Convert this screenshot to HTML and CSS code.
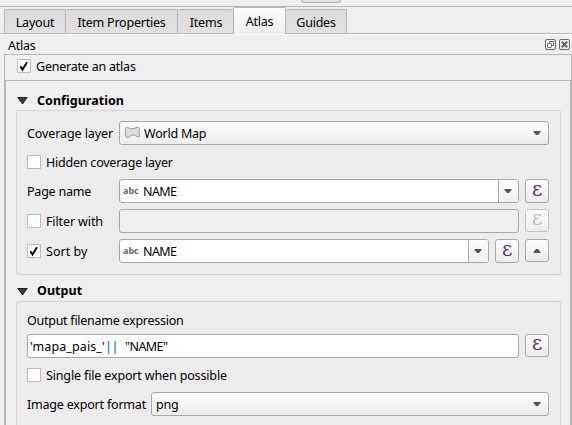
FILE: index.html
```
<!DOCTYPE html>
<html lang="en">
<head>
<meta charset="utf-8">
<title>Atlas</title>
<link rel="stylesheet" href="styles.css">
</head>
<body>
<svg class="defs" width="0" height="0" aria-hidden="true">
  <symbol id="down" viewBox="0 0 8 5"><path d="M.5 0h7v1L5 4H3L.5 1z"/></symbol>
  <symbol id="tri" viewBox="0 0 11 8"><path d="M.8.500h9.400L5.500 7z" fill="#3c3c3c" stroke="#222" stroke-linejoin="round"/></symbol>
  <symbol id="tick" viewBox="0 0 14 14"><path d="M3.300 7.200 5.500 10.600 10 3.200" fill="none" stroke="#000" stroke-width="1.900"/></symbol>
</svg>
<div class="toolbar"><div class="stub"></div></div>
<nav class="tabs">
  <div class="tab t1"><span>Layout</span></div>
  <div class="tab t2"><span>Item Properties</span></div>
  <div class="tab t3"><span>Items</span></div>
  <div class="tab t4 active"><span>Atlas</span></div>
  <div class="tab t5"><span>Guides</span></div>
</nav>
<header class="dock">
  <span class="dock-title">Atlas</span>
  <svg class="dock-btn" viewBox="0 0 11 11"><rect x=".5" y=".5" width="10" height="10" rx="1.500"/><path d="M4.500 4V2.500h4v4H7"/><rect x="2.500" y="4.500" width="4" height="4" rx=".7"/></svg>
  <svg class="dock-btn" viewBox="0 0 11 11"><rect x=".5" y=".5" width="10" height="10" rx="1.500"/><path class="cross" d="M2.800 2.800l5.400 5.400M8.200 2.800L2.800 8.200"/></svg>
</header>
<main class="panel">
  <div class="generate"><span class="check"><svg><use href="#tick"/></svg></span><span class="text">Generate an atlas</span></div>
  <div class="scroll">
    <h2><svg class="tri"><use href="#tri"/></svg><span>Configuration</span></h2>
    <section class="group config">
      <div class="row"><label class="coverage">Coverage layer</label>
        <div class="combo"><svg class="poly" viewBox="0 0 17 13"><path d="M2.500 1.200C4 .7 5 2.900 8 2.900S12.500.700 14.700 1.500c1.700.8.600 3 .2 4.500-.2 1.500 1.400 3.500.2 4.700-1.700 1.200-3.600-1.900-6.200-1.900C6.500 8.800 5 12 2.800 11.400.6 10.700 1.500 8 1.700 6.500 1.900 5 .3 2 2.500 1.200z"/></svg><span class="value">World Map</span><svg class="arrow"><use href="#down"/></svg></div></div>
      <div class="row"><span class="check"></span><span class="text">Hidden coverage layer</span></div>
      <div class="row"><label>Page name</label>
        <div class="field"><span class="abc">abc</span><span class="value name">NAME</span><div class="drop"><svg class="arrow"><use href="#down"/></svg></div></div><div class="btn"><span>ε</span></div></div>
      <div class="row wide"><div class="lab"><span class="check"></span><span class="text">Filter with</span></div>
        <div class="field disabled"></div><div class="btn short off"><span>ε</span></div></div>
      <div class="row wide"><div class="lab"><span class="check"><svg><use href="#tick"/></svg></span><span class="text sort">Sort by</span></div>
        <div class="field"><span class="abc">abc</span><span class="value name">NAME</span><div class="drop"><svg class="arrow"><use href="#down"/></svg></div></div><div class="btn"><span>ε</span></div><div class="btn short"><svg class="arrow up"><use href="#down"/></svg></div></div>
    </section>
    <h2 class="second"><svg class="tri"><use href="#tri"/></svg><span>Output</span></h2>
    <section class="group output">
      <div class="caption"><span>Output filename expression</span></div>
      <div class="row"><div class="field expr"><span class="text str">'mapa_pais_'</span><span class="text op">||</span><span class="text name">"NAME"</span></div><div class="btn short"><span>ε</span></div></div>
      <div class="row"><span class="check"></span><span class="text single">Single file export when possible</span></div>
      <div class="row"><label>Image export format</label><div class="combo png"><span class="value">png</span><svg class="arrow"><use href="#down"/></svg></div></div>
    </section>
  </div>
</main>
</body>
</html>
```
FILE: styles.css
```
* { box-sizing: border-box; }
body {
  margin: 0; width: 572px; height: 425px; overflow: hidden;
  background: #efefef; color: #000;
  font: 12.5px/18px "Noto Sans", sans-serif; letter-spacing: -.22px; white-space: nowrap;
}
svg { display: block; flex: none; }
.defs { position: absolute; }
.toolbar { height: 7px; border-bottom: 1px solid #b6b6b6; }
.stub { width: 40px; height: 3px; margin-left: 301px; background: #e2e2e2; border: 1px solid #b2b2b2; border-top: 0; border-radius: 0 0 3px 3px; }
.tabs { height: 28px; display: flex; align-items: flex-end; padding-left: 4px; border-bottom: 1px solid #fff; box-shadow: inset 0 -1px #b6b6b6; }
.tab { height: 25px; display: flex; align-items: center; justify-content: center; padding-top: 3px; background: linear-gradient(#dcdcdc, #e0e0e0); border: 1px solid #b6b6b6; border-left-width: 0; border-radius: 2px 2px 0 0; }
.t1 { width: 62px; border-left-width: 1px; }
.t2 { width: 112px; }
.t3 { width: 55px; border-right-width: 0; padding-left: 1px; }
.t4 { width: 53px; }
.t5 { width: 61px; }
.tab.active { height: 27px; padding-top: 2px; background: linear-gradient(#fafafa, #efefef); border-left-width: 1px; border-bottom: 0; }
.dock { height: 19px; display: flex; align-items: center; padding: 0 2px 0 8px; gap: 3px; }
.dock-title { flex: 1; padding-top: 2px; }
.dock-btn { width: 11px; height: 11px; fill: none; stroke: #686868; stroke-width: 1; }
.dock-btn .cross { stroke-width: 2.2; }
.panel { margin-left: 4px; height: 371px; border: 1px solid #b6b6b6; border-bottom: 0; }
.generate { height: 25px; display: flex; align-items: center; gap: 6px; padding: 0 0 3px 12px; }
.check { width: 14px; height: 14px; flex: none; background: #fff; border: 1px solid #bcbcbc; }
.check svg { width: 14px; height: 14px; margin: -1px; }
.scroll { height: 345px; border: 1px solid #b6b6b6; border-bottom: 0; padding: 9px 9px 0 10px; overflow: hidden; }
h2 { margin: 0; height: 20px; display: flex; align-items: center; font-size: 12.5px; line-height: 19px; font-weight: 700; letter-spacing: .04px; gap: 9px; padding: 0 0 0 1px; }
h2.second { margin-top: 6px; padding-bottom: 2px; }
.tri { width: 11px; height: 8px; margin-top: 1px; }
h2.second .tri { margin-top: 3px; }
.group { background: #ececec; border: 1px solid #d5d5d5; border-radius: 2px; padding: 10px 11px 0 10px; }
.config { height: 165px; display: flex; flex-direction: column; gap: 5px; }
.config .wide { margin-top: 1px; }
.output { height: 150px; display: flex; flex-direction: column; gap: 5px; padding-top: 9px; }
.row { height: 24px; flex: none; display: flex; align-items: center; gap: 6px; }
.text, .value, label { padding-top: 2px; }
.check + .text { margin-left: -1px; }
.config label, .lab { width: 86px; flex: none; }
.config .coverage { letter-spacing: -.1px; }
.lab { display: flex; align-items: center; gap: 6px; }
.lab .text { letter-spacing: -.12px; }
.lab .sort { letter-spacing: .05px; }
.caption { height: 18px; padding-top: 1px; letter-spacing: -.26px; }
.combo, .field, .btn { border: 1px solid #a8a8a8; border-radius: 3px; height: 24px; display: flex; align-items: center; }
.combo { flex: 1; background: linear-gradient(#fdfdfd, #ececec); padding: 0 7px 0 4px; }
.field { flex: 1; background: #fff; padding-left: 3px; }
.field.disabled { background: #efefef; }
.value { flex: 1; }
.name { letter-spacing: -.6px; }
.poly { width: 17px; height: 13px; margin: -1px 3px 0 0; fill: #dedede; stroke: #999; }
.abc { width: 20px; font-size: 9px; font-weight: 700; color: #686868; letter-spacing: 0; }
.drop { width: 20px; height: 22px; border-left: 1px solid #a8a8a8; border-radius: 0 2px 2px 0; background: linear-gradient(#fdfdfd, #eee); display: flex; align-items: center; padding-left: 5px; }
.arrow { width: 8px; height: 5px; fill: #555; }
.up { transform: scaleY(-1); }
.btn { width: 24px; flex: none; justify-content: center; background: linear-gradient(#fdfdfd, #ececec); color: #5c3566; font: 20px/20px "DejaVu Serif", serif; }
.btn span { margin-top: -5px; }
.btn.short { height: 23px; align-self: flex-start; }
.btn.off { color: #bdbdbd; border-color: #c4c4c4; }
.expr { padding-left: 2px; }
.str { letter-spacing: .1px; }
.op { color: #2b8ad0; margin: 0 7px 0 0; letter-spacing: -.3px; font-weight: 600; }
.single { letter-spacing: -.15px; }
.output label { width: 118px; flex: none; letter-spacing: -.2px; }
```
